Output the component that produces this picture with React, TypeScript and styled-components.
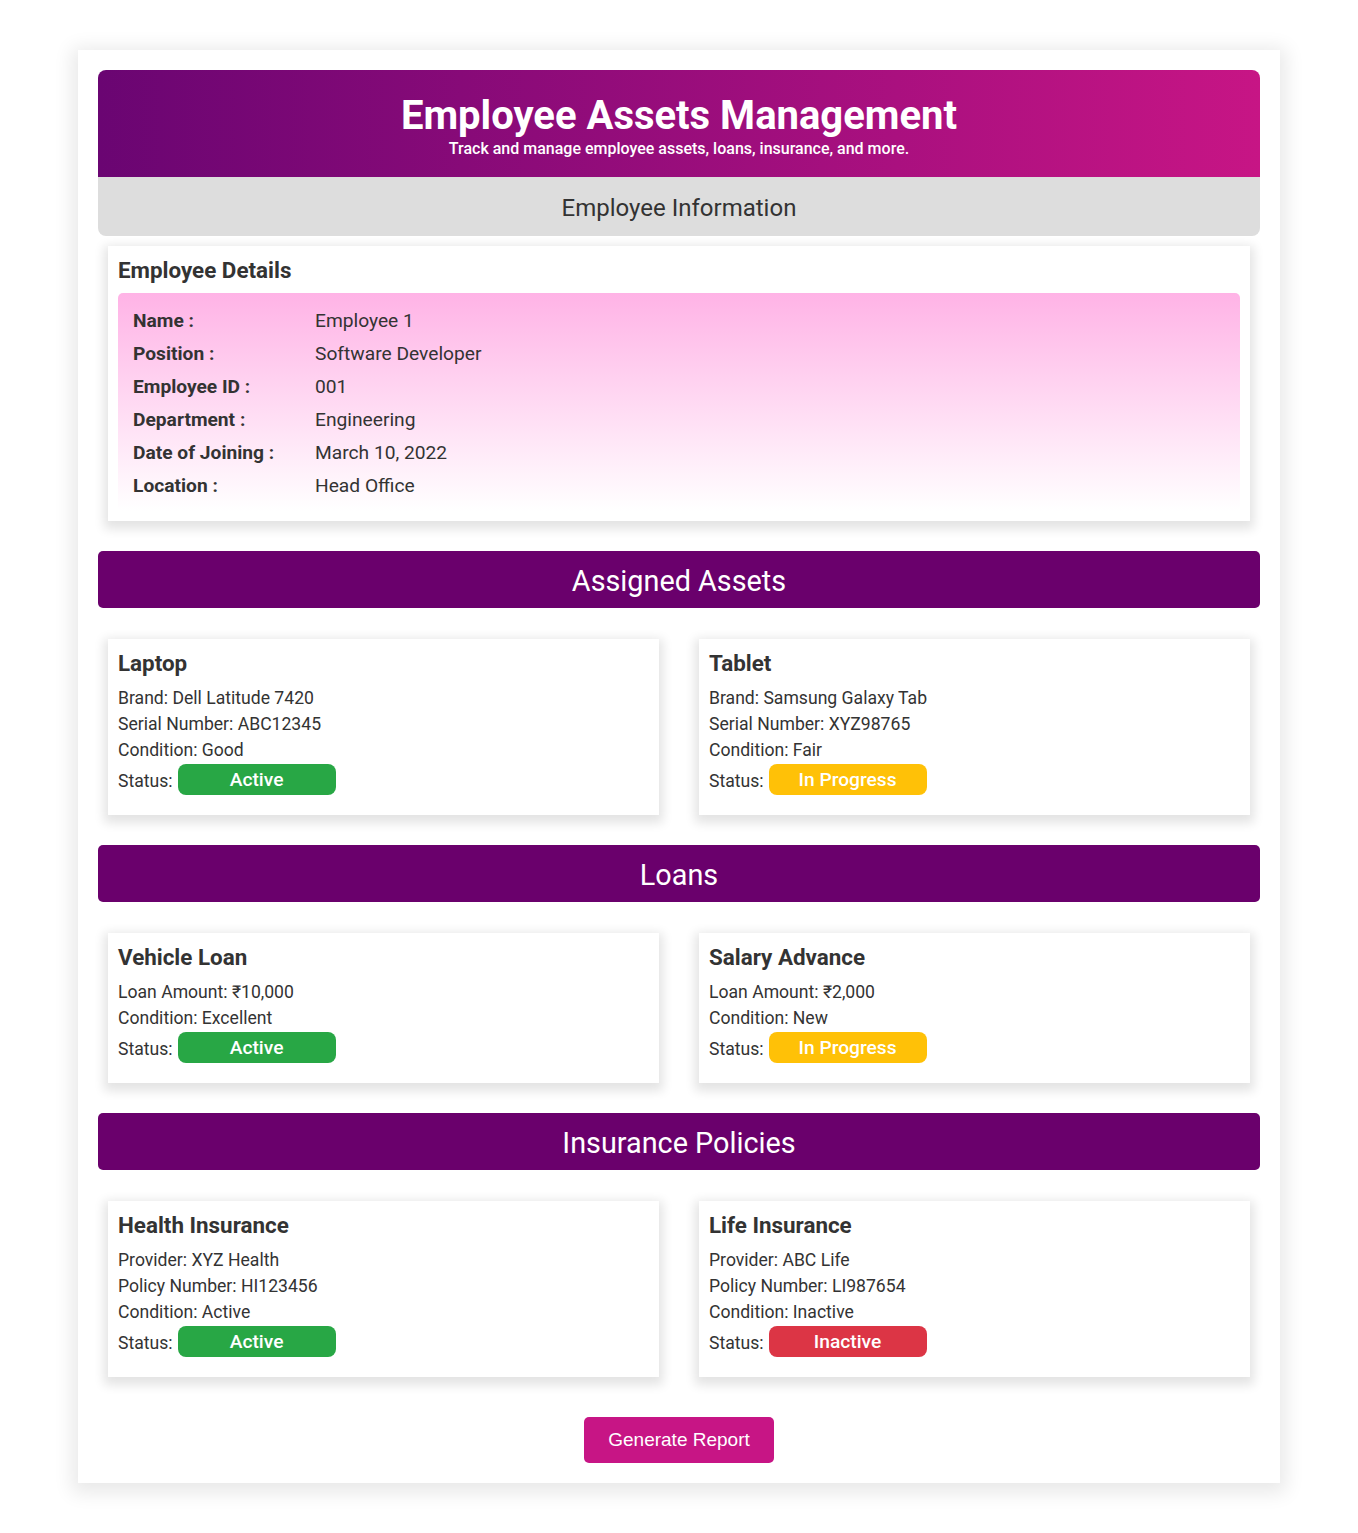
import { createGlobalStyle } from "styled-components"
import styled from "styled-components"

const GlobalStyle = createGlobalStyle`
  body {
    margin: 0;
    background-color: #ffffff;
    font-family: Roboto, "Noto Sans", sans-serif;
    color: #333;
  }
  * {
    box-sizing: border-box;
  }
`

const Container = styled.div`
  display: flex;
  flex-direction: column;
  width: 1202px;
  margin: 50px auto;
  padding: 20px;
  background-color: #fff;
  box-shadow: 0 4px 18px 6px rgba(0, 0, 0, 0.09);
`

const Header = styled.header`
  background: linear-gradient(to right, #6a0572, #c71585);
  color: #fff;
  text-align: center;
  border-radius: 8px 8px 0 0;
  padding: 23px 20px 18px;
`

const Title = styled.h1`
  margin: 0;
  font-size: 40px;
  line-height: 46px;
  font-weight: 700;
`

const Subtitle = styled.p`
  margin: 0;
  font-size: 16px;
  line-height: 20px;
  font-weight: 500;
`

const InfoBar = styled.div`
  background-color: #dddddd;
  text-align: center;
  font-size: 24px;
  line-height: 59px;
  color: #333;
  border-radius: 0 0 8px 8px;
  padding-top: 2px;
  height: 59px;
`

const Card = styled.div`
  background-color: #fff;
  margin: 10px;
  padding: 10px;
  box-shadow: 0 4px 10px 4px rgba(0, 0, 0, 0.11);
`

const DetailsTitle = styled.h2`
  margin: 0 0 9px;
  font-size: 22.4px;
  line-height: 28px;
  font-weight: 700;
`

const DetailsBox = styled.div`
  background: linear-gradient(to bottom, #ffb3e6, #ffffff);
  border-radius: 5px;
  padding: 11px 15px 9px;
`

const DetailRow = styled.div`
  display: grid;
  grid-template-columns: 182px 1fr;
  font-size: 19.2px;
  line-height: 33px;
`

const Label = styled.span`
  font-weight: 700;
`

const SectionHeader = styled.h2`
  margin: 20px 0 21px;
  height: 57px;
  padding-top: 2px;
  background-color: #6a006c;
  color: #fff;
  text-align: center;
  font-size: 28.8px;
  font-weight: 400;
  line-height: 57px;
  border-radius: 5px;
`

const Grid = styled.div`
  display: grid;
  grid-template-columns: 1fr 1fr;
  column-gap: 20px;
`

const ItemCard = styled(Card)`
  padding: 10px 10px 21px;
`

const ItemTitle = styled.h3`
  margin: 0 0 7px;
  font-size: 22.4px;
  line-height: 29px;
  font-weight: 700;
`

const ItemLine = styled.p`
  margin: 0;
  font-size: 17.6px;
  line-height: 26px;
`

const StatusLine = styled.div`
  display: flex;
  align-items: flex-end;
  font-size: 17.6px;
  line-height: 26px;
  margin-top: 1px;
`

const Badge = styled.span<{ $tone: "active" | "progress" | "inactive" }>`
  display: inline-block;
  width: 158px;
  height: 31px;
  margin-left: 5px;
  margin-bottom: -1px;
  border-radius: 8px;
  color: #fff;
  text-align: center;
  font-size: 19.2px;
  font-weight: 500;
  line-height: 31px;
  padding-bottom: 3px;
  background-color: ${(p) =>
    p.$tone === "active" ? "#28a745" : p.$tone === "progress" ? "#ffc107" : "#dc3545"};
`

const Footer = styled.div`
  display: flex;
  justify-content: center;
  margin-top: 30px;
`

const ReportButton = styled.button`
  background-color: #c71585;
  color: #fff;
  border: none;
  border-radius: 5px;
  padding: 12px 24px;
  font-family: "Liberation Sans", Arial, sans-serif;
  font-size: 19px;
  line-height: 22px;
  cursor: pointer;
`

type Tone = "active" | "progress" | "inactive"
type Item = { title: string; lines: string[]; status: string; tone: Tone }

const details: [string, string][] = [
  ["Name :", "Employee 1"],
  ["Position :", "Software Developer"],
  ["Employee ID :", "001"],
  ["Department :", "Engineering"],
  ["Date of Joining :", "March 10, 2022"],
  ["Location :", "Head Office"],
]

const sections: { title: string; items: Item[] }[] = [
  {
    title: "Assigned Assets",
    items: [
      {
        title: "Laptop",
        lines: ["Brand: Dell Latitude 7420", "Serial Number: ABC12345", "Condition: Good"],
        status: "Active",
        tone: "active",
      },
      {
        title: "Tablet",
        lines: ["Brand: Samsung Galaxy Tab", "Serial Number: XYZ98765", "Condition: Fair"],
        status: "In Progress",
        tone: "progress",
      },
    ],
  },
  {
    title: "Loans",
    items: [
      {
        title: "Vehicle Loan",
        lines: ["Loan Amount: ₹10,000", "Condition: Excellent"],
        status: "Active",
        tone: "active",
      },
      {
        title: "Salary Advance",
        lines: ["Loan Amount: ₹2,000", "Condition: New"],
        status: "In Progress",
        tone: "progress",
      },
    ],
  },
  {
    title: "Insurance Policies",
    items: [
      {
        title: "Health Insurance",
        lines: ["Provider: XYZ Health", "Policy Number: HI123456", "Condition: Active"],
        status: "Active",
        tone: "active",
      },
      {
        title: "Life Insurance",
        lines: ["Provider: ABC Life", "Policy Number: LI987654", "Condition: Inactive"],
        status: "Inactive",
        tone: "inactive",
      },
    ],
  },
]

export default function App() {
  return (
    <>
      <GlobalStyle />
      <Container>
        <Header>
          <Title>Employee Assets Management</Title>
          <Subtitle>Track and manage employee assets, loans, insurance, and more.</Subtitle>
        </Header>
        <InfoBar>Employee Information</InfoBar>
        <Card>
          <DetailsTitle>Employee Details</DetailsTitle>
          <DetailsBox>
            {details.map(([label, value]) => (
              <DetailRow key={label}>
                <Label>{label}</Label>
                <span>{value}</span>
              </DetailRow>
            ))}
          </DetailsBox>
        </Card>
        {sections.map((section) => (
          <section key={section.title}>
            <SectionHeader>{section.title}</SectionHeader>
            <Grid>
              {section.items.map((item) => (
                <ItemCard key={item.title}>
                  <ItemTitle>{item.title}</ItemTitle>
                  {item.lines.map((line) => (
                    <ItemLine key={line}>{line}</ItemLine>
                  ))}
                  <StatusLine>
                    Status:<Badge $tone={item.tone}>{item.status}</Badge>
                  </StatusLine>
                </ItemCard>
              ))}
            </Grid>
          </section>
        ))}
        <Footer>
          <ReportButton>Generate Report</ReportButton>
        </Footer>
      </Container>
    </>
  )
}
